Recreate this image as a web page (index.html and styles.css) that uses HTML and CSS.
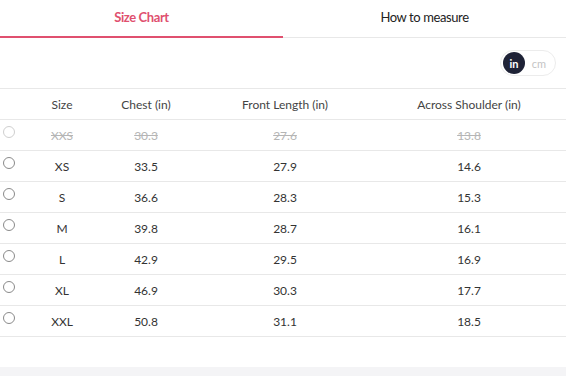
FILE: index.html
```html
<!DOCTYPE html>
<html>
<head>
<meta charset="utf-8">
<link rel="stylesheet" href="styles.css">
</head>
<body>
<div class="panel">
  <div class="tabs">
    <div class="tab active">Size Chart</div>
    <div class="tab">How to measure</div>
  </div>
  <div class="toolbar">
    <div class="unit-toggle">
      <span class="unit on">in</span>
      <span class="unit off">cm</span>
    </div>
  </div>
  <div class="table">
    <div class="row head">
      <span></span><span>Size</span><span>Chest (in)</span><span>Front Length (in)</span><span>Across Shoulder (in)</span>
    </div>
    <div class="row disabled">
      <span class="radio"></span><span>XXS</span><span>30.3</span><span>27.6</span><span>13.8</span>
    </div>
    <div class="row">
      <span class="radio"></span><span>XS</span><span>33.5</span><span>27.9</span><span>14.6</span>
    </div>
    <div class="row">
      <span class="radio"></span><span>S</span><span>36.6</span><span>28.3</span><span>15.3</span>
    </div>
    <div class="row">
      <span class="radio"></span><span>M</span><span>39.8</span><span>28.7</span><span>16.1</span>
    </div>
    <div class="row">
      <span class="radio"></span><span>L</span><span>42.9</span><span>29.5</span><span>16.9</span>
    </div>
    <div class="row">
      <span class="radio"></span><span>XL</span><span>46.9</span><span>30.3</span><span>17.7</span>
    </div>
    <div class="row">
      <span class="radio"></span><span>XXL</span><span>50.8</span><span>31.1</span><span>18.5</span>
    </div>
  </div>
  <div class="spacer"></div>
</div>
<div class="footer"></div>
</body>
</html>
```
FILE: styles.css
```css
* { box-sizing: border-box; }
html, body { margin: 0; padding: 0; }
body {
  width: 566px;
  height: 376px;
  overflow: hidden;
  background: #fff;
  font-family: Lato, "Open Sans", sans-serif;
  color: #333;
}
.tabs {
  display: flex;
  height: 38px;
  border-bottom: 1px solid #e8e8e8;
}
.tab {
  flex: 1;
  display: flex;
  align-items: center;
  justify-content: center;
  font-size: 13px;
  letter-spacing: -0.4px;
  color: #222;
  padding-bottom: 3px;
}
.tab.active {
  color: #e0506f;
  font-weight: 700;
  border-bottom: 2px solid #e0506f;
  margin-bottom: -1px;
}
.toolbar {
  display: flex;
  justify-content: flex-end;
  padding: 12px 10px 0 0;
  height: 51px;
  border-bottom: 1px solid #e8e8e8;
}
.unit-toggle {
  display: flex;
  align-items: center;
  width: 56px;
  height: 26px;
  padding: 1px 2px;
  border: 1px solid #ececec;
  border-radius: 13px;
}
.unit {
  height: 22px;
  display: flex;
  align-items: center;
  justify-content: center;
  font-size: 11px;
  color: #c4c4c4;
}
.unit.on {
  width: 22px;
  background: #1e2236;
  color: #fff;
  border-radius: 50%;
  font-weight: 700;
}
.unit.off { flex: 1; }
.row {
  display: grid;
  grid-template-columns: 20px 84px 84px 194px 174px 1fr;
  align-items: center;
  height: 31px;
  border-bottom: 1px solid #e8e8e8;
  font-size: 12px;
  color: #333;
}
.row > span { text-align: center; }
.row.head { color: #444; }
.row.disabled > span { color: #b5b5b5; text-decoration: line-through; }
.radio {
  width: 12px;
  height: 12px;
  border: 1px solid #8a8a8a;
  border-radius: 50%;
  margin-left: 3px;
  margin-top: -6px;
}
.row.disabled .radio { border-color: #cfcfcf; }
.spacer { height: 30px; }
.footer { height: 20px; background: #f4f4f6; }
```
